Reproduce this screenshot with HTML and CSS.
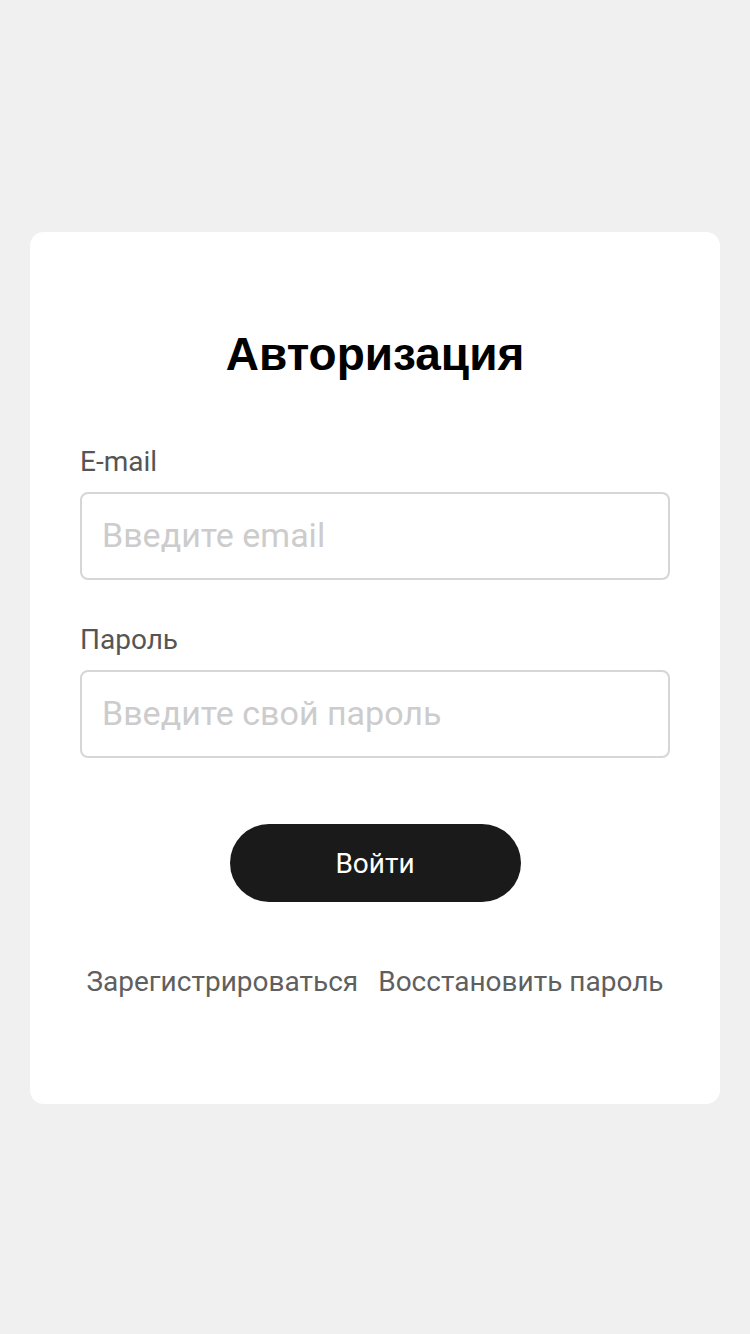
FILE: index.html
```html
<!DOCTYPE html>
<html lang="ru">
<head>
    <meta charset="UTF-8">
    <meta name="viewport" content="width=device-width, initial-scale=1.0">
    <title>Авторизация</title>
    <link rel="stylesheet" href="styles.css">
</head>
<body>
    <div class="page">
        <form class="auth-card">
            <h1 class="auth-title">Авторизация</h1>

            <div class="field">
                <label class="field-label" for="email">E-mail</label>
                <input class="field-input" id="email" type="email" placeholder="Введите email">
            </div>

            <div class="field">
                <label class="field-label" for="password">Пароль</label>
                <input class="field-input" id="password" type="password" placeholder="Введите свой пароль">
            </div>

            <button class="btn-login" type="button">Войти</button>

            <div class="auth-links">
                <a href="#">Зарегистрироваться</a>
                <a href="#">Восстановить пароль</a>
            </div>
        </form>
    </div>
</body>
</html>
```

FILE: styles.css
```css
html, body {
    margin: 0;
    padding: 0;
}
body {
    background: #f0f0f0;
    font-family: Roboto, "Noto Sans", Arial, sans-serif;
}
.page {
    min-height: 1334px;
    padding: 232px 30px 0;
    box-sizing: border-box;
}

.auth-card {
    background: #fff;
    border-radius: 14px;
    padding: 94px 50px 100px;
    display: flex;
    flex-direction: column;
    height: 872px;
    box-sizing: border-box;
}
.auth-title {
    margin: 0 0 62px;
    text-align: center;
    font-family: "Liberation Sans", Arial, sans-serif;
    font-weight: bold;
    font-size: 46px;
    line-height: 56px;
    color: #000;
}

.field {
    display: flex;
    flex-direction: column;
    margin-bottom: 42px;
}
.field-label {
    font-size: 28px;
    line-height: 36px;
    color: #555;
    margin-bottom: 12px;
}
.field-input {
    height: 88px;
    border: 2px solid #d6d6d6;
    border-radius: 8px;
    padding: 0 20px 3px;
    font-family: Roboto, sans-serif;
    font-size: 34px;
    color: #333;
    box-sizing: border-box;
    outline: none;
}
.field-input::placeholder {
    color: #cccccc;
}

.btn-login {
    align-self: center;
    width: 291px;
    height: 78px;
    margin-top: 24px;
    border: none;
    border-radius: 39px;
    background: #1a1a1a;
    color: #fff;
    font-family: Roboto, sans-serif;
    font-size: 28px;
    cursor: pointer;
}

.auth-links {
    display: flex;
    justify-content: center;
    gap: 20px;
    margin-top: 62px;
}
.auth-links a {
    font-size: 28px;
    line-height: 36px;
    color: #5f5f5f;
    text-decoration: none;
}
```
